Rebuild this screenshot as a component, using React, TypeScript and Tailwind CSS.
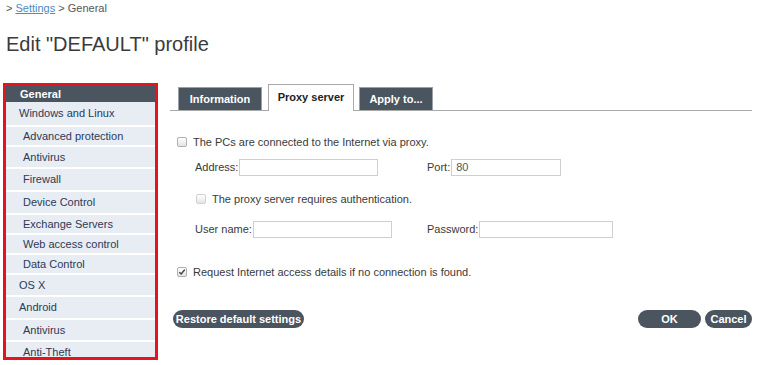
import React from 'react';

type NavItem = { label: string; sub?: boolean; h: string };

const navItems: NavItem[] = [
  { label: 'Windows and Linux', h: 'h-[23px]' },
  { label: 'Advanced protection', sub: true, h: 'h-[20px]' },
  { label: 'Antivirus', sub: true, h: 'h-[22px]' },
  { label: 'Firewall', sub: true, h: 'h-[23px]' },
  { label: 'Device Control', sub: true, h: 'h-[23px]' },
  { label: 'Exchange Servers', sub: true, h: 'h-[20px]' },
  { label: 'Web access control', sub: true, h: 'h-[20px]' },
  { label: 'Data Control', sub: true, h: 'h-[20px]' },
  { label: 'OS X', h: 'h-[22px]' },
  { label: 'Android', h: 'h-[23px]' },
  { label: 'Antivirus', sub: true, h: 'h-[22px]' },
  { label: 'Anti-Theft', sub: true, h: 'h-[22px]' },
];

const Check: React.FC<{ checked?: boolean; faded?: boolean }> = ({ checked, faded }) => (
  <span
    className={`w-[10px] h-[10px] shrink-0 rounded-[2px] border flex items-center justify-center bg-gradient-to-b from-white to-[#e4e4e4] ${
      faded ? 'border-[#d2d2d2]' : 'border-[#b0b0b0]'
    }`}
  >
    {checked && (
      <svg width="8" height="8" viewBox="0 0 8 8">
        <path d="M1.3 4.2 L3.2 6 L6.8 1.6" fill="none" stroke="#444" strokeWidth="1.5" />
      </svg>
    )}
  </span>
);

const Field: React.FC<{ w: string; value?: string }> = ({ w, value }) => (
  <div className={`${w} h-[17px] ml-px border border-[#cfcfcf] bg-white pl-[4px] leading-[15px] text-[#555]`}>{value}</div>
);

const App: React.FC = () => {
  return (
    <div className="w-[758px] h-[365px] overflow-hidden bg-white text-[11px] text-[#3a3a3a] font-['Liberation_Sans',Arial,sans-serif]">
      <div className="pl-[6px] h-[16px] leading-[16px] text-[#555]">
        &gt; <span className="text-[#4a8cc4] underline">Settings</span> &gt; General
      </div>
      <h1 className="mt-[16px] pl-[6px] text-[20px] leading-[24px] text-[#3b3b3b]">Edit "DEFAULT" profile</h1>

      <div className="mt-[27px] flex">
        <aside className="ml-[3px] w-[155px] h-[277px] border-[3px] border-[#e5131d] bg-[#e8ecf3] overflow-hidden">
          <div className="h-[16px] bg-[#4a5560] pl-[14px] leading-[16px] font-bold text-white">General</div>
          {navItems.map((item, i) => (
            <div
              key={i}
              className={`${item.h} flex items-center text-[#2d3a55] ${item.sub ? 'pl-[17px]' : 'pl-[13px]'} ${
                i > 0 ? 'border-t-2 border-white' : ''
              }`}
            >
              {item.label}
            </div>
          ))}
        </aside>

        <main className="ml-[12px] flex-1 pr-[6px]">
          <div className="h-[28px] flex items-end border-b border-[#a9a9a9]">
            <div className="ml-[8px] w-[84px] h-[23px] bg-[#4a5560] border border-[#9aa1a8] border-b-0 flex items-center justify-center font-bold text-white">
              Information
            </div>
            <div className="ml-[6px] w-[86px] h-[27px] -mb-px bg-white border border-[#a9a9a9] border-b-0 flex items-start pt-[4px] justify-center font-bold text-[#222]">
              Proxy server
            </div>
            <div className="ml-[5px] w-[74px] h-[23px] bg-[#4a5560] border border-[#9aa1a8] border-b-0 flex items-center justify-center font-bold text-white">
              Apply to...
            </div>
          </div>

          <div className="mt-[23px] pl-[7px] h-[16px] flex items-center gap-[6px]">
            <Check />
            <span>The PCs are connected to the Internet via proxy.</span>
          </div>

          <div className="mt-[9px] pl-[25px] flex items-center">
            <div className="w-[232px] flex items-center">
              <span>Address:</span>
              <Field w="w-[139px]" />
            </div>
            <div className="flex items-center">
              <span>Port:</span>
              <Field w="w-[110px]" value="80" />
            </div>
          </div>

          <div className="mt-[15px] pl-[26px] h-[16px] flex items-center gap-[6px]">
            <Check faded />
            <span>The proxy server requires authentication.</span>
          </div>

          <div className="mt-[14px] pl-[25px] flex items-center">
            <div className="w-[232px] flex items-center">
              <span>User name:</span>
              <Field w="w-[139px]" />
            </div>
            <div className="flex items-center">
              <span>Password:</span>
              <Field w="w-[134px]" />
            </div>
          </div>

          <div className="mt-[26px] pl-[7px] h-[16px] flex items-center gap-[6px]">
            <Check checked />
            <span>Request Internet access details if no connection is found.</span>
          </div>

          <div className="mt-[30px] pl-[3px] flex items-center justify-between">
            <button className="h-[18px] w-[131px] rounded-full bg-[#4a5560] font-bold text-white">
              Restore default settings
            </button>
            <div className="flex gap-[4px]">
              <button className="h-[18px] w-[63px] rounded-full bg-[#4a5560] font-bold text-white">OK</button>
              <button className="h-[18px] w-[47px] rounded-full bg-[#4a5560] font-bold text-white">Cancel</button>
            </div>
          </div>
        </main>
      </div>
    </div>
  );
};

export default App;
